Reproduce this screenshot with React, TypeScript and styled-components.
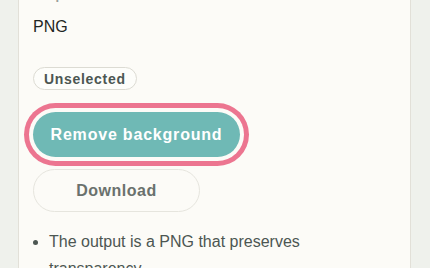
import React from 'react'
import styled, { createGlobalStyle } from 'styled-components'

const colors = {
  page: '#eff1ec',
  card: '#fcfbf7',
  border: '#e2e0d8',
  text: '#1f2623',
  muted: '#4c5652',
  teal: '#6fb9b5',
  pink: '#ec7590'
}

const GlobalStyle = createGlobalStyle`
  html, body {
    margin: 0;
    padding: 0;
    height: 100%;
    overflow: hidden;
    background: ${colors.page};
    font-family: "Liberation Sans", Arial, sans-serif;
  }
`

const Page = styled.div`
  height: 268px;
  overflow: hidden;
`

const Card = styled.div`
  margin: -29px 0 0 18px;
  width: 393px;
  box-sizing: border-box;
  height: 320px;
  background: ${colors.card};
  border-left: 1px solid ${colors.border};
  border-right: 1px solid ${colors.border};
  padding: 13.5px 14px 0;
  display: flex;
  flex-direction: column;
  align-items: flex-start;
`

const Label = styled.div`
  font-size: 13px;
  font-weight: 700;
  color: #9a9f9b;
  line-height: 20px;
`

const Value = styled.div`
  margin-top: 10px;
  font-size: 16px;
  line-height: 24px;
  color: ${colors.text};
`

const Pill = styled.span`
  margin-top: 28.5px;
  height: 23px;
  box-sizing: border-box;
  display: inline-flex;
  align-items: center;
  padding: 0 10px;
  border: 1px solid #dcdbd3;
  border-radius: 12px;
  background: #fdfdfa;
  font-size: 14px;
  font-weight: 700;
  letter-spacing: 0.7px;
  color: ${colors.muted};
`

const Button = styled.button<{ $primary?: boolean }>`
  height: ${p => (p.$primary ? 45 : 43)}px;
  width: ${p => (p.$primary ? 207 : 167)}px;
  margin-top: ${p => (p.$primary ? 22 : 12)}px;
  padding: 0;
  box-sizing: border-box;
  border-radius: 23px;
  font-family: inherit;
  font-size: 16px;
  font-weight: 700;
  letter-spacing: ${p => (p.$primary ? 0.8 : 0.5)}px;
  cursor: pointer;
  border: ${p => (p.$primary ? 'none' : '1px solid #e6e5de')};
  background: ${p => (p.$primary ? colors.teal : colors.card)};
  color: ${p => (p.$primary ? '#ffffff' : '#6a716d')};
  box-shadow: ${p =>
    p.$primary ? `0 0 0 4px ${colors.card}, 0 0 0 9px ${colors.pink}` : 'none'};
`

const Notes = styled.ul`
  margin: 15.5px 0 0;
  padding: 0 0 0 16px;
  font-size: 16px;
  line-height: 27px;
  color: ${colors.muted};
  width: 330px;
`

const App: React.FC = () => (
  <Page>
    <GlobalStyle />
    <Card>
      <Label>Output format</Label>
      <Value>PNG</Value>
      <Pill>Unselected</Pill>
      <Button $primary>Remove background</Button>
      <Button>Download</Button>
      <Notes>
        <li>The output is a PNG that preserves transparency.</li>
      </Notes>
    </Card>
  </Page>
)

export default App
